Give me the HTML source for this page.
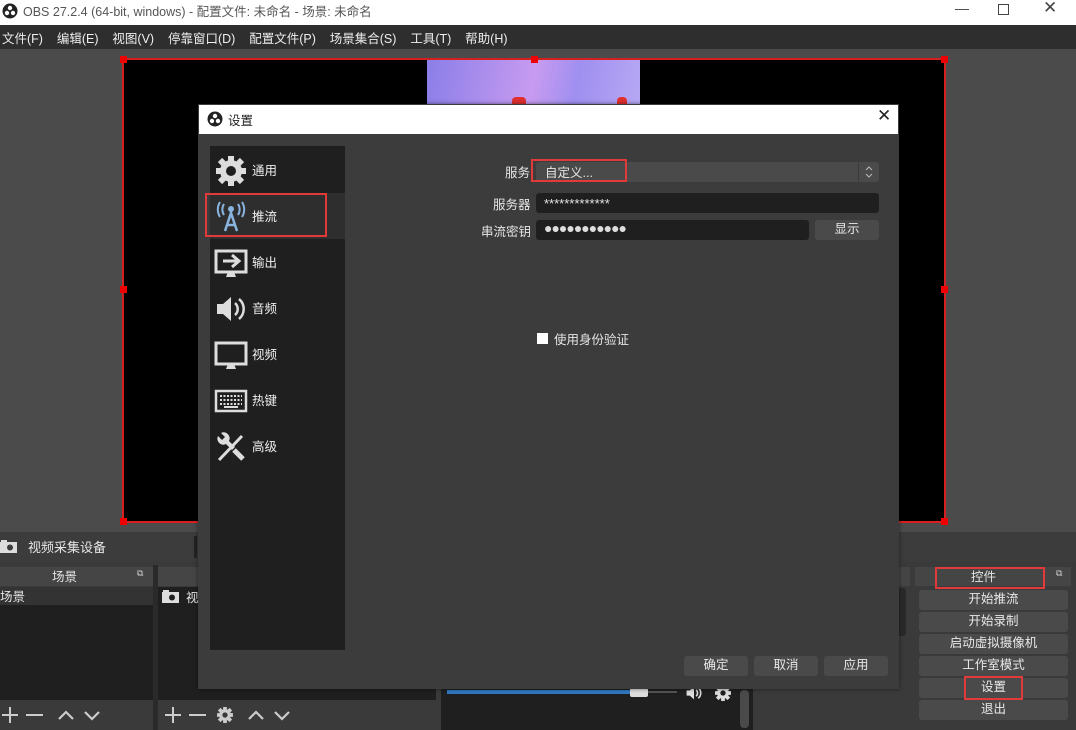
<!DOCTYPE html>
<html><head><meta charset="utf-8"><style>
*{margin:0;padding:0;box-sizing:border-box}
body{width:1076px;height:730px;overflow:hidden;background:#3a3a3a;font-family:"Liberation Sans","Noto Sans CJK SC",sans-serif;font-size:12px;color:#e6e6e6;position:relative}
.a{position:absolute}
.btn{position:absolute;background:#4a4a4a;border-radius:3px;text-align:center;color:#e8e8e8;font-size:12.5px;line-height:18px;height:20px}
.red{position:absolute;border:2px solid #e03a3a}
.nav{position:absolute;left:0;width:135px;height:46px}
.nav span{position:absolute;left:42px;top:13px;font-size:12.5px;color:#eee}
.nav svg{position:absolute;left:4px;top:7px}
</style></head><body>
<!-- title bar -->
<div class="a" style="left:0;top:0;width:1076px;height:25px;background:#fff"></div>
<svg class="a" style="left:2px;top:3px" width="16" height="16" viewBox="0 0 16 16"><circle cx="8" cy="8" r="7.5" fill="#222"/><circle cx="8" cy="5" r="2.2" fill="#fff"/><circle cx="5" cy="10" r="2.2" fill="#fff"/><circle cx="11" cy="10" r="2.2" fill="#fff"/></svg>
<div class="a" style="left:23px;top:1px;color:#555;font-size:12.5px">OBS 27.2.4 (64-bit, windows) - 配置文件: 未命名 - 场景: 未命名</div>
<div class="a" style="left:955px;top:0px;color:#444;font-size:14px">—</div>
<div class="a" style="left:998px;top:4px;width:11px;height:11px;border:1px solid #444"></div>
<div class="a" style="left:1043px;top:-2px;color:#444;font-size:17px">✕</div>
<!-- menu -->
<div class="a" style="left:0;top:25px;width:1076px;height:24px;background:#2e2e2e"></div>
<div class="a" style="left:2px;top:28px;font-size:12.5px;color:#eee;white-space:pre">文件(F)    编辑(E)    视图(V)    停靠窗口(D)    配置文件(P)    场景集合(S)    工具(T)    帮助(H)</div>
<!-- preview -->
<div class="a" style="left:0;top:49px;width:1076px;height:483px;background:#4b4b4b"></div>
<div class="a" style="left:122px;top:58px;width:824px;height:465px;background:#000;border:2px solid #d42020"></div>
<div class="a" style="left:427px;top:60px;width:213px;height:45px;background:linear-gradient(100deg,#8a7ee8,#c79bf0 50%,#9f8ff0 70%,#b7a8f4)"></div>
<div class="a" style="left:512px;top:97px;width:14px;height:8px;border-radius:4px 4px 0 0;background:#e03030"></div>
<div class="a" style="left:617px;top:97px;width:10px;height:8px;border-radius:4px 4px 0 0;background:#e03030"></div>
<div class="a" style="left:120px;top:56px;width:7px;height:7px;background:#e00"></div>
<div class="a" style="left:531px;top:56px;width:7px;height:7px;background:#e00"></div>
<div class="a" style="left:941px;top:56px;width:7px;height:7px;background:#e00"></div>
<div class="a" style="left:120px;top:286px;width:7px;height:7px;background:#e00"></div>
<div class="a" style="left:941px;top:286px;width:7px;height:7px;background:#e00"></div>
<div class="a" style="left:120px;top:518px;width:7px;height:7px;background:#e00"></div>
<div class="a" style="left:941px;top:518px;width:7px;height:7px;background:#e00"></div>
<!-- source toolbar -->
<div class="a" style="left:0;top:532px;width:1076px;height:30px;background:#3c3c3c"></div>
<svg class="a" style="left:0;top:540px" width="17" height="13"><rect x="0" y="2" width="17" height="11" fill="#ddd"/><rect x="1" y="0" width="6" height="3" fill="#ddd"/><circle cx="10" cy="7.5" r="3" fill="#3c3c3c"/></svg>
<div class="a" style="left:28px;top:537px;font-size:13px">视频采集设备</div>
<div class="a" style="left:194px;top:536px;width:3px;height:22px;background:#222"></div>
<!-- scene dock -->
<div class="a" style="left:0;top:567px;width:153px;height:19px;background:#454545"></div>
<div class="a" style="left:52px;top:566px;font-size:12.5px">场景</div>
<div class="a" style="left:137px;top:568px;font-size:9px;color:#ccc">⧉</div>
<div class="a" style="left:0;top:587px;width:153px;height:113px;background:#1f1f1f"></div>
<div class="a" style="left:0;top:587px;width:153px;height:18px;background:#333"></div>
<div class="a" style="left:0;top:586px;font-size:12.5px">场景</div>
<div class="a" style="left:153px;top:565px;width:5px;height:165px;background:#2a2a2a"></div>
<svg class="a" style="left:0;top:705px" width="50" height="20"><path d="M2 10h16M10 2v16M26 10h17" stroke="#ccc" stroke-width="2"/></svg>
<svg class="a" style="left:56px;top:708px" width="50" height="14"><path d="M3 11 L10 4 L17 11 M29 4 L36 11 L43 4" stroke="#ccc" stroke-width="2.2" fill="none"/></svg>
<!-- sources dock -->
<div class="a" style="left:158px;top:567px;width:290px;height:19px;background:#454545"></div>
<div class="a" style="left:158px;top:587px;width:278px;height:113px;background:#1f1f1f"></div>
<svg class="a" style="left:162px;top:590px" width="17" height="13"><rect x="0" y="2" width="17" height="11" fill="#ddd"/><rect x="1" y="0" width="6" height="3" fill="#ddd"/><circle cx="10" cy="7.5" r="3" fill="#1f1f1f"/></svg>
<div class="a" style="left:186px;top:587px;font-size:12.5px">视</div>
<svg class="a" style="left:163px;top:705px" width="50" height="20"><path d="M2 10h16M10 2v16M26 10h17" stroke="#ccc" stroke-width="2"/></svg>
<svg class="a" style="left:216px;top:706px" width="18" height="18" viewBox="0 0 34 34"><g stroke="#ccc" stroke-width="7"><path d="M17 2v30M2 17h30M6 6l22 22M28 6L6 28"/></g><circle cx="17" cy="17" r="11" fill="#ccc"/><circle cx="17" cy="17" r="5" fill="#3a3a3a"/></svg>
<svg class="a" style="left:246px;top:708px" width="50" height="14"><path d="M3 11 L10 4 L17 11 M29 4 L36 11 L43 4" stroke="#ccc" stroke-width="2.2" fill="none"/></svg>
<!-- mixer -->
<div class="a" style="left:441px;top:680px;width:312px;height:50px;background:#1f1f1f"></div>
<div class="a" style="left:447px;top:690px;width:185px;height:4px;background:#2f78c0"></div>
<div class="a" style="left:632px;top:691px;width:45px;height:2px;background:#555"></div>
<div class="a" style="left:630px;top:688px;width:18px;height:9px;background:#ddd;border-radius:2px"></div>
<svg class="a" style="left:682px;top:684px" width="24" height="18" viewBox="0 0 34 34"><path d="M3 12h6l8-7v24l-8-7H3z" fill="#ddd"/><path d="M21 11a8 8 0 0 1 0 12M25 7a13 13 0 0 1 0 20" stroke="#ddd" stroke-width="3" fill="none"/></svg>
<svg class="a" style="left:714px;top:684px" width="18" height="18" viewBox="0 0 34 34"><g stroke="#ddd" stroke-width="7"><path d="M17 2v30M2 17h30M6 6l22 22M28 6L6 28"/></g><circle cx="17" cy="17" r="11" fill="#ddd"/><circle cx="17" cy="17" r="5" fill="#1f1f1f"/></svg>
<div class="a" style="left:740px;top:690px;width:9px;height:38px;background:#4a4a4a;border-radius:4px"></div>
<!-- controls dock -->
<div class="a" style="left:896px;top:567px;width:14px;height:19px;background:#454545"></div>
<div class="a" style="left:896px;top:588px;width:10px;height:48px;background:#2a2a2a;border-radius:3px"></div>
<div class="a" style="left:915px;top:567px;width:156px;height:19px;background:#454545"></div>
<div class="a" style="left:971px;top:566px;font-size:12.5px">控件</div>
<div class="a" style="left:1056px;top:568px;font-size:9px;color:#ccc">⧉</div>
<div class="btn" style="left:919px;top:590px;width:149px">开始推流</div>
<div class="btn" style="left:919px;top:612px;width:149px">开始录制</div>
<div class="btn" style="left:919px;top:634px;width:149px">启动虚拟摄像机</div>
<div class="btn" style="left:919px;top:656px;width:149px">工作室模式</div>
<div class="btn" style="left:919px;top:678px;width:149px">设置</div>
<div class="btn" style="left:919px;top:700px;width:149px">退出</div>
<div class="red" style="left:935px;top:567px;width:110px;height:22px"></div>
<div class="red" style="left:964px;top:676px;width:59px;height:24px"></div>
<!-- dialog -->
<div class="a" style="left:198px;top:104px;width:701px;height:585px;background:#3c3c3c;box-shadow:0 0 4px rgba(0,0,0,.5)"></div>
<div class="a" style="left:199px;top:105px;width:699px;height:29px;background:#fff"></div>
<svg class="a" style="left:207px;top:111px" width="16" height="16" viewBox="0 0 16 16"><circle cx="8" cy="8" r="7.5" fill="#222"/><circle cx="8" cy="5" r="2.2" fill="#fff"/><circle cx="5" cy="10" r="2.2" fill="#fff"/><circle cx="11" cy="10" r="2.2" fill="#fff"/></svg>
<div class="a" style="left:228px;top:110px;color:#222;font-size:12.5px">设置</div>
<div class="a" style="left:877px;top:106px;color:#222;font-size:17px">✕</div>
<div class="a" style="left:210px;top:146px;width:135px;height:504px;background:#1f1f1f">
 <div class="nav" style="top:1px"><svg width="34" height="34" viewBox="0 0 34 34"><g stroke="#ddd" stroke-width="6"><path d="M17 2v30M2 17h30M6 6l22 22M28 6L6 28"/></g><circle cx="17" cy="17" r="11" fill="#ddd"/><circle cx="17" cy="17" r="5" fill="#1f1f1f"/></svg><span>通用</span></div>
 <div class="nav" style="top:47px;background:#2e2e2e"><svg width="34" height="34" viewBox="0 0 34 34"><circle cx="17" cy="9" r="3" fill="#8ab4e0"/><path d="M10 4a10 10 0 0 0 0 11M24 4a10 10 0 0 1 0 11M6 2a14 14 0 0 0 0 15M28 2a14 14 0 0 1 0 15" stroke="#8ab4e0" stroke-width="2" fill="none"/><path d="M11 31L17 13L23 31M13 25h8" stroke="#8ab4e0" stroke-width="2.5" fill="none"/></svg><span>推流</span></div>
 <div class="nav" style="top:93px"><svg width="34" height="34" viewBox="0 0 34 34"><rect x="2" y="5" width="30" height="21" fill="none" stroke="#ddd" stroke-width="3"/><path d="M12 31h10l-2-5h-6z" fill="#ddd"/><path d="M9 15h14M18 9l7 6-7 6" stroke="#ddd" stroke-width="3" fill="none"/></svg><span>输出</span></div>
 <div class="nav" style="top:139px"><svg width="34" height="34" viewBox="0 0 34 34"><path d="M3 12h6l8-7v24l-8-7H3z" fill="#ddd"/><path d="M21 11a8 8 0 0 1 0 12M25 7a13 13 0 0 1 0 20" stroke="#ddd" stroke-width="2.5" fill="none"/></svg><span>音频</span></div>
 <div class="nav" style="top:185px"><svg width="34" height="34" viewBox="0 0 34 34"><rect x="2" y="5" width="30" height="21" fill="none" stroke="#ddd" stroke-width="3"/><path d="M12 31h10l-2-5h-6z" fill="#ddd"/></svg><span>视频</span></div>
 <div class="nav" style="top:231px"><svg width="34" height="34" viewBox="0 0 34 34"><rect x="2" y="7" width="30" height="20" fill="none" stroke="#ddd" stroke-width="2.5"/><path d="M6 12h22M6 16h22M6 20h22" stroke="#ddd" stroke-width="2" stroke-dasharray="2 1.5"/><path d="M10 23h14" stroke="#ddd" stroke-width="2"/></svg><span>热键</span></div>
 <div class="nav" style="top:277px"><svg width="34" height="34" viewBox="0 0 34 34"><path d="M5 30L28 6" stroke="#ddd" stroke-width="3"/><path d="M20 20l9 9" stroke="#ddd" stroke-width="5"/><path d="M4 6a6 6 0 0 0 8 8l6 6 3-3-6-6a6 6 0 0 0-8-8l4 4-3 3z" fill="#ddd"/></svg><span>高级</span></div>
</div>
<div class="red" style="left:205px;top:193px;width:122px;height:44px"></div>
<!-- form -->
<div class="a" style="left:505px;top:162px;font-size:12.5px">服务</div>
<div class="a" style="left:536px;top:162px;width:343px;height:20px;background:#4a4a4a;border-radius:3px"></div>
<div class="a" style="left:858px;top:162px;width:1px;height:20px;background:#3a3a3a"></div>
<svg class="a" style="left:864px;top:164px" width="10" height="16"><path d="M2 6l3-3 3 3M2 10l3 3 3-3" stroke="#bbb" stroke-width="1" fill="none"/></svg>
<div class="a" style="left:545px;top:162px;font-size:12.5px">自定义...</div>
<div class="red" style="left:531px;top:159px;width:96px;height:23px"></div>
<div class="a" style="left:493px;top:194px;font-size:12.5px">服务器</div>
<div class="a" style="left:536px;top:193px;width:343px;height:20px;background:#1f1f1f;border-radius:3px"></div>
<div class="a" style="left:544px;top:196px;font-size:13px;letter-spacing:0">*************</div>
<div class="a" style="left:481px;top:221px;font-size:12.5px">串流密钥</div>
<div class="a" style="left:536px;top:220px;width:273px;height:20px;background:#1f1f1f;border-radius:3px"></div>
<div class="a" style="left:544px;top:220px;font-size:14px;letter-spacing:-1px;color:#ddd">●●●●●●●●●●●</div>
<div class="btn" style="left:815px;top:220px;width:64px">显示</div>
<div class="a" style="left:537px;top:333px;width:11px;height:11px;background:#fff"></div>
<div class="a" style="left:554px;top:329px;font-size:12.5px">使用身份验证</div>
<div class="btn" style="left:684px;top:656px;width:64px">确定</div>
<div class="btn" style="left:754px;top:656px;width:64px">取消</div>
<div class="btn" style="left:824px;top:656px;width:64px">应用</div>
</body></html>
